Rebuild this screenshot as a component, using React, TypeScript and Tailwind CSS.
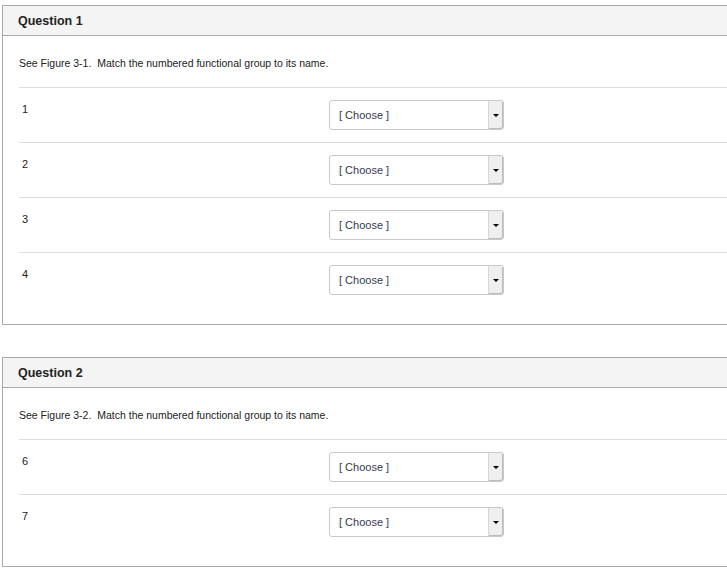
import React from "react";

type Question = {
  title: string;
  prompt: string;
  items: string[];
};

const questions: Question[] = [
  {
    title: "Question 1",
    prompt: "See Figure 3-1.  Match the numbered functional group to its name.",
    items: ["1", "2", "3", "4"],
  },
  {
    title: "Question 2",
    prompt: "See Figure 3-2.  Match the numbered functional group to its name.",
    items: ["6", "7"],
  },
];

function ChooseSelect() {
  return (
    <div className="flex h-[30px] w-[175px] items-stretch rounded-[3px] border border-[#c9c9c9] bg-white">
      <div className="flex flex-1 items-center pl-[9px] text-[11px] text-[#363a4f]">
        [ Choose ]
      </div>
      <div className="flex w-[15px] items-center justify-center rounded-r-[2px] border-l border-[#d6d6d6] bg-[#efefef] shadow-[inset_-1px_-1px_0_#bdbdbd]">
        <span className="block h-0 w-0 border-x-[3px] border-t-[3px] border-x-transparent border-t-black" />
      </div>
    </div>
  );
}

function QuestionPanel({ q }: { q: Question }) {
  return (
    <div className="w-[760px] border border-[#aaaaaa] bg-white">
      <div className="flex h-[30px] items-center border-b border-[#aaaaaa] bg-[#f4f4f4] px-[15px] pt-[2px]">
        <h2 className="text-[12.5px] font-bold text-[#222]">{q.title}</h2>
      </div>
      <div className="pl-[16px] pb-[17px]">
        <p className="whitespace-pre pt-[19px] pb-[16px] text-[10.5px] leading-[16px] text-[#222]">
          {q.prompt}
        </p>
        {q.items.map((n) => (
          <div
            key={n}
            className="flex border-t border-[#dddddd] pt-[12px] pb-[12px]"
          >
            <div className="w-[310px] pl-[3px] pt-[2px] text-[11px] leading-[14px] text-[#222]">
              {n}
            </div>
            <ChooseSelect />
          </div>
        ))}
      </div>
    </div>
  );
}

export default function App() {
  return (
    <div
      className="h-[573px] w-[727px] overflow-hidden bg-white pl-[2px] pt-[5px]"
      style={{ fontFamily: '"Liberation Sans", Arial, sans-serif' }}
    >
      <div className="flex flex-col gap-[32px]">
        {questions.map((q) => (
          <QuestionPanel key={q.title} q={q} />
        ))}
      </div>
    </div>
  );
}
